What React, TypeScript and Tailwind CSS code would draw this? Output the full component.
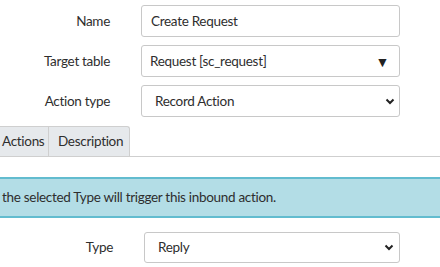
const font = { fontFamily: "Lato, 'Liberation Sans', sans-serif", letterSpacing: "-0.3px" }

function Chevron() {
  return (
    <svg width="10" height="7" viewBox="0 0 10 7" className="shrink-0">
      <path d="M1.5 1.5 L5 5 L8.5 1.5" fill="none" stroke="#222" strokeWidth="2" />
    </svg>
  )
}

function Row({ label, children }: { label: string; children: React.ReactNode }) {
  return (
    <div className="flex items-center h-[32px]">
      <div className="w-[110px] text-right text-[13.5px] text-[#2e2e2e]">{label}</div>
      <div className="ml-[31px] w-[259px] h-full">{children}</div>
    </div>
  )
}

function Box({ children }: { children: React.ReactNode }) {
  return (
    <div className="h-full flex items-center border border-[#c8c8c8] rounded-[3px] bg-white text-[13.5px] text-[#2e2e2e]">
      {children}
    </div>
  )
}

export default function App() {
  return (
    <div className="w-[440px] h-[267px] bg-white overflow-hidden" style={font}>
      <div className="pt-[5px] flex flex-col gap-[8px]">
        <Row label="Name">
          <Box>
            <span className="pl-[9px]">Create Request</span>
          </Box>
        </Row>
        <Row label="Target table">
          <Box>
            <span className="pl-[8px] flex-1">Request [sc_request]</span>
            <span className="pr-[10px] text-[14px] text-[#222]">▼</span>
          </Box>
        </Row>
        <Row label="Action type">
          <Box>
            <span className="pl-[13px] flex-1">Record Action</span>
            <span className="pr-[4px]">
              <Chevron />
            </span>
          </Box>
        </Row>
      </div>

      <div className="mt-[9px] flex h-[31px] border-b border-[#cfcfcf]">
        <div className="-ml-[4px] w-[53px] pl-[5px] flex items-center bg-[#e6e9ec] border border-b-0 border-[#cfcfcf] rounded-tl-[3px] text-[13.5px] text-[#2e2e2e]">
          Actions
        </div>
        <div className="w-[81px] pl-[9px] flex items-center bg-[#e6e9ec] border border-l-0 border-b-0 border-[#cfcfcf] rounded-tr-[3px] text-[13.5px] text-[#2e2e2e]">
          Description
        </div>
      </div>

      <div className="mt-[20px] h-[41px] flex items-center bg-[#b3dde6] border-y-2 border-[#62bccf] pl-[2px] text-[13.5px] text-[#2e2e2e]">
        the selected Type will trigger this inbound action.
      </div>

      <div className="mt-[14px] flex items-center h-[31px]">
        <div className="w-[113px] text-right text-[13.5px] text-[#2e2e2e]">Type</div>
        <div className="ml-[31px] w-[256px] h-full">
          <Box>
            <span className="pl-[13px] flex-1">Reply</span>
            <span className="pr-[5px]">
              <Chevron />
            </span>
          </Box>
        </div>
      </div>
    </div>
  )
}
